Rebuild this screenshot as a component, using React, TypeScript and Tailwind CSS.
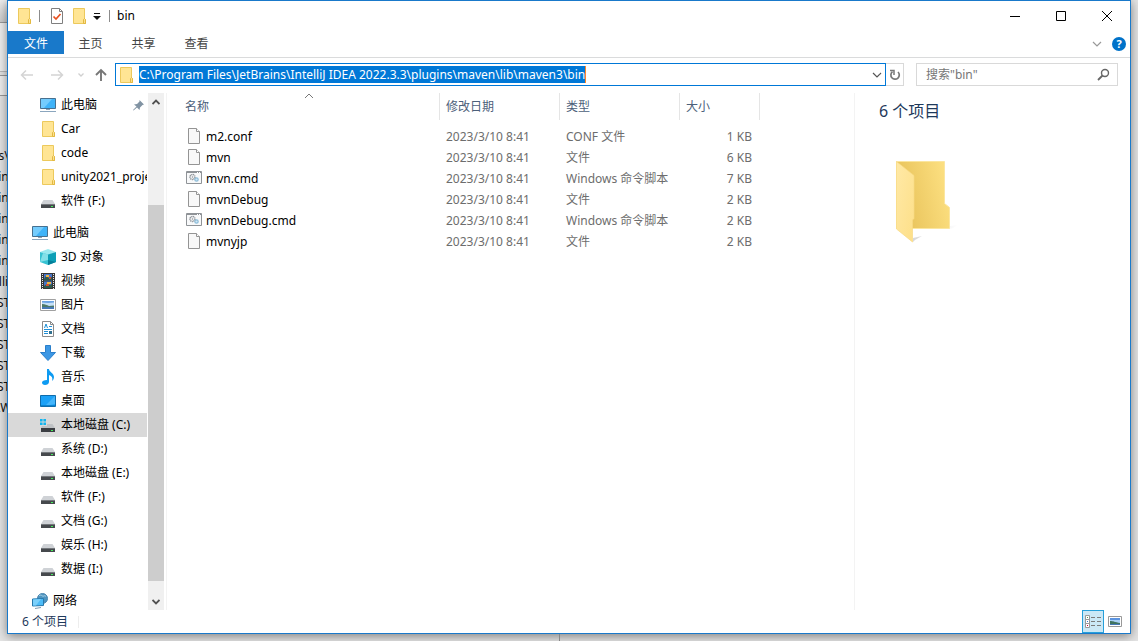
import * as React from 'react';

type IconName =
  | 'pc' | 'folder' | 'drive' | 'system' | 'cube' | 'video' | 'picture' | 'doc'
  | 'download' | 'music' | 'desktop' | 'network';

interface NavEntry { label: string; icon: IconName; root?: boolean; pinned?: boolean; selected?: boolean }

const quickAccess: NavEntry[] = [
  { label: '此电脑', icon: 'pc', pinned: true },
  { label: 'Car', icon: 'folder' },
  { label: 'code', icon: 'folder' },
  { label: 'unity2021_project', icon: 'folder' },
  { label: '软件 (F:)', icon: 'drive' },
];

const thisPc: NavEntry[] = [
  { label: '此电脑', icon: 'pc', root: true },
  { label: '3D 对象', icon: 'cube' },
  { label: '视频', icon: 'video' },
  { label: '图片', icon: 'picture' },
  { label: '文档', icon: 'doc' },
  { label: '下载', icon: 'download' },
  { label: '音乐', icon: 'music' },
  { label: '桌面', icon: 'desktop' },
  { label: '本地磁盘 (C:)', icon: 'system', selected: true },
  { label: '系统 (D:)', icon: 'drive' },
  { label: '本地磁盘 (E:)', icon: 'drive' },
  { label: '软件 (F:)', icon: 'drive' },
  { label: '文档 (G:)', icon: 'drive' },
  { label: '娱乐 (H:)', icon: 'drive' },
  { label: '数据 (I:)', icon: 'drive' },
];

const network: NavEntry[] = [{ label: '网络', icon: 'network', root: true }];

const files = [
  { name: 'm2.conf', type: 'CONF 文件', size: '1 KB' },
  { name: 'mvn', type: '文件', size: '6 KB' },
  { name: 'mvn.cmd', type: 'Windows 命令脚本', size: '7 KB' },
  { name: 'mvnDebug', type: '文件', size: '2 KB' },
  { name: 'mvnDebug.cmd', type: 'Windows 命令脚本', size: '2 KB' },
  { name: 'mvnyjp', type: '文件', size: '2 KB' },
];

const behindLines = ['s\\', 'in', 'in', 'in', 'in', 'in', 'lli', 'ST', 'ST', 'ST', 'ST', 'ST', '\\W'];

function Svg({ size = 16, children }: { size?: number; children: React.ReactNode }) {
  return <svg width={size} height={size} viewBox={`0 0 ${size} ${size}`} fill="none" className="shrink-0" aria-hidden="true">{children}</svg>;
}

function FolderIcon() {
  return (
    <Svg>
      <path d="M2.500 .5h11v11h1v4h-12z" fill="#ffe594" stroke="#ecc95c" />
      <path d="M12.500 15.500v-4l1-1 1 1v4z" fill="#fbe090" stroke="#e3b941" />
    </Svg>
  );
}

function PictureIcon() {
  return (
    <Svg>
      <path d="M.5 2.500h15v11H.5z" fill="#fff" stroke="#a0a0a0" />
      <path d="M2 4h12v8H2z" fill="#c5e0f7" />
      <path d="M2 4h12v1.500L8 6 2 5.500z" fill="#6ba3e3" />
      <path d="M2 7c3 0 5 1 7 2l5-.5V10H2z" fill="#4d7968" />
      <path d="M2 10h12v2H2z" fill="#4779b5" />
    </Svg>
  );
}

function NavIcon({ name }: { name: IconName }) {
  switch (name) {
    case 'folder':
      return <FolderIcon />;
    case 'picture':
      return <PictureIcon />;
    case 'pc':
      return (
        <Svg>
          <path d="M.5 1.500h15v10H.5z" fill="#3fb3f8" stroke="#47708f" />
          <path d="M1 2h11L4 11H1z" fill="#74ccfd" />
          <path d="M6 12h4v1H6z" fill="#8ca2b5" />
          <path d="M0 14.500h16" stroke="#8ba6be" />
        </Svg>
      );
    case 'drive':
      return (
        <Svg>
          <path d="M3.500 7h9L15 11H1z" fill="#cfd2d6" />
          <path d="M1 11h14v4H1z" fill="#46494d" />
          <path d="M1 11.500h14" stroke="#74787c" />
          <path d="M11 13h2v1h-2z" fill="#45ee5c" />
        </Svg>
      );
    case 'system':
      return (
        <Svg>
          <path d="M0 2h2.600v2.600H0zM3.400 2H6v2.600H3.400zM0 5.400h2.600V8H0zM3.400 5.400H6V8H3.400z" fill="#12b5ef" />
          <path d="M7 7h5.500l2.500 4H1l1-2h5z" fill="#bfc2c5" />
          <path d="M1 11h14v4H1z" fill="#3b3e42" />
          <path d="M11 13h2v1h-2z" fill="#45ee5c" />
        </Svg>
      );
    case 'cube':
      return (
        <Svg>
          <path d="M0 3l8-3 8 3-8 3z" fill="#9ae9ef" />
          <path d="M0 3l8 2.500V16l-8-3z" fill="#37c2d2" />
          <path d="M16 3L8 5.500V16l8-3z" fill="#0b9fb6" />
          <path d="M3 4l5 1.500V11l-8 2z" fill="#82e0e8" />
          <path d="M8 11l8 2-8 3z" fill="#057f99" />
        </Svg>
      );
    case 'video':
      return (
        <Svg>
          <path d="M1 0h14v16H1z" fill="#373737" />
          <path d="M4 1h8v6.500H4zM4 8.500h8V15H4z" fill="#4775c8" />
          <path d="M4 6l2-3 3 2 3-1v3.500H4zM4 13l3-2 3 1 2-1v4H4z" fill="#2f5a4d" />
          <path d="M6 2h3v2H6zM7 9h4v2H7z" fill="#f0b63c" />
          <path d="M9 4h2v2H9zM6 11h3v2H6z" fill="#d0502c" />
          <path d="M2.500 1v15M13.500 1v15" stroke="#e8e8e8" strokeDasharray="1 1" />
        </Svg>
      );
    case 'doc':
      return (
        <Svg>
          <path d="M2.500 .5h8l3 3v12h-11z" fill="#fff" stroke="#8b8b8b" />
          <path d="M10.500 .5v3h3" stroke="#8b8b8b" />
          <path d="M4.500 7L6 3l1.500 4M9 5.500h3M4 8.500h8M4 10.500h4M4 12.500h4" stroke="#1f8fd6" />
          <path d="M9 10h3v3H9z" fill="#31708f" />
        </Svg>
      );
    case 'download':
      return <Svg><path d="M5.500 .5h5v7h5l-7.500 8-7.500-8h5z" fill="#3c97e4" stroke="#2a7fcb" /></Svg>;
    case 'music':
      return (
        <Svg>
          <path d="M7 0h2c0 3 5 4 5 8 0 2-1 3-2 4 1-3 0-5-3-6v7c0 2-2 3-4 3s-3-1-3-2.500S4 11 7 11z" fill="#0e9bf2" />
        </Svg>
      );
    case 'desktop':
      return (
        <Svg>
          <path d="M.5 2.500h15v11H.5z" fill="#1ba1f7" stroke="#0f6cab" />
          <path d="M15 3v8L5 13z" fill="#44b5fb" />
          <path d="M1 12.500h14" stroke="#0a82cf" />
        </Svg>
      );
    case 'network':
      return (
        <Svg>
          <circle cx="10.500" cy="5.500" r="5" fill="#4f94bf" stroke="#4884ad" />
          <path d="M7 2.500c2-1 3 0 4 1 1-1 2-1 3 0" stroke="#a9d3e8" />
          <path d="M.5 6l11-.5v7l-11 .5z" fill="#4dbcf8" stroke="#2678ac" />
          <path d="M1 6.500l8-.5-5 6.500H1z" fill="#7bd0fb" />
          <path d="M3 15.500l6-1" stroke="#7e9bb0" />
        </Svg>
      );
  }
}

function FileIcon({ name }: { name: string }) {
  if (name.endsWith('.cmd')) {
    return (
      <Svg>
        <path d="M.5 1.500h15v12H.5z" fill="#f8f9fa" stroke="#8f9397" />
        <path d="M1 2.500h14" stroke="#8f9397" />
        <path d="M11 2h1v1h-1zM13 2h1v1h-1z" fill="#fff" />
        <circle cx="6.500" cy="7" r="2.500" stroke="#8f9499" strokeWidth="1.500" strokeDasharray="1.200 .5" />
        <circle cx="6.500" cy="7" r=".8" fill="#8f9499" />
        <circle cx="10.500" cy="9.500" r="1.700" fill="#cfe6f5" stroke="#8dbcd8" strokeWidth="1.200" />
      </Svg>
    );
  }
  return (
    <Svg>
      <path d="M2.500 .5h8l3 3v12h-11z" fill="#f8f8f8" stroke="#949494" />
      <path d="M10.500 .5v3h3" fill="#fff" stroke="#949494" />
    </Svg>
  );
}

function Chevron({ up, color = '#555', width = 1.2 }: { up?: boolean; color?: string; width?: number }) {
  return <Svg size={10}><path d={up ? 'M1 7l4-4 4 4' : 'M1 3l4 4 4-4'} stroke={color} strokeWidth={width} /></Svg>;
}

function ScrollArrow({ up }: { up?: boolean }) {
  return <Svg size={8}><path d={up ? 'M.5 6L4 2.500 7.500 6' : 'M.5 2L4 5.500 7.500 2'} stroke="#505050" strokeWidth="1.800" /></Svg>;
}

function NavGroup({ items }: { items: NavEntry[] }) {
  return (
    <ul>
      {items.map((item) => (
        <li key={item.label}>
          <button
            type="button"
            className={`flex h-6 w-full items-center gap-[5px] overflow-hidden whitespace-nowrap text-left text-black ${item.root ? 'pl-6' : 'pl-8'} ${item.selected ? 'bg-[#d9d9d9]' : 'hover:bg-[#e5f3ff]'}`}
          >
            <NavIcon name={item.icon} />
            <span className={item.pinned ? 'flex-1' : ''}>{item.label}</span>
            {item.pinned && (
              <span className="pr-[3px]">
                <Svg size={11}><path d="M6.500 0L11 4.500l-1.500.5L7 7.500 6.500 10 4 7.500.5 10.500 0 10l3.500-3.500L1 4.500 4 4l2.500-2.500z" fill="#8193a3" /></Svg>
              </span>
            )}
          </button>
        </li>
      ))}
    </ul>
  );
}

function TitleBar() {
  return (
    <header className="flex h-[30px] shrink-0 items-center">
      <div className="flex flex-1 items-center pl-2">
        <FolderIcon />
        <span className="ml-[7px] h-3 w-px bg-[#8c8c8c]" />
        <button type="button" aria-label="属性" className="ml-[9px]">
          <Svg>
            <path d="M2.500 .5h8l3 3v12h-11z" fill="#fff" stroke="#7f7f7f" />
            <path d="M10.500 .5v3h3" stroke="#7f7f7f" />
            <path d="M4.500 8.500L7 11l4.500-5" stroke="#e8501f" strokeWidth="1.700" />
          </Svg>
        </button>
        <button type="button" aria-label="新建文件夹" className="ml-[6px]"><FolderIcon /></button>
        <button type="button" aria-label="自定义快速访问工具栏" className="ml-[6px]">
          <Svg size={8}><path d="M1 1.500h6" stroke="#111" /><path d="M0 4h8L4 8z" fill="#111" /></Svg>
        </button>
        <span className="ml-2 h-3 w-px bg-[#8c8c8c]" />
        <h1 className="ml-[7px] text-black">bin</h1>
      </div>
      <button type="button" aria-label="最小化" className="flex h-full w-[46px] items-center justify-center"><Svg size={10}><path d="M0 5.500h10" stroke="#000" /></Svg></button>
      <button type="button" aria-label="最大化" className="flex h-full w-[46px] items-center justify-center"><Svg size={10}><path d="M.5 .5h9v9h-9z" stroke="#000" /></Svg></button>
      <button type="button" aria-label="关闭" className="flex h-full w-[46px] items-center justify-center"><Svg size={10}><path d="M0 0l10 10M10 0L0 10" stroke="#000" /></Svg></button>
    </header>
  );
}

function Ribbon() {
  return (
    <nav className="flex h-[27px] shrink-0 items-start border-b border-[#dadbdc] text-[#444]">
      <button type="button" className="h-[23px] w-14 bg-[#1979ca] pt-[2px] text-white">文件</button>
      {['主页', '共享', '查看'].map((tab) => <button key={tab} type="button" className="h-[25px] w-[53px]">{tab}</button>)}
      <div className="flex h-[26px] flex-1 items-center justify-end gap-[10px] pr-1">
        <button type="button" aria-label="展开功能区"><Chevron color="#999" /></button>
        <button type="button" aria-label="帮助" className="flex size-[14px] items-center justify-center rounded-full bg-[#0072c9] text-[11px] leading-[14px] font-bold text-white">?</button>
      </div>
    </nav>
  );
}

function AddressRow() {
  return (
    <div className="flex h-[35px] shrink-0 items-start pt-[5px] pr-3 pl-1">
      <button type="button" aria-label="后退" className="flex h-[23px] w-[30px] items-center justify-center"><Svg size={14}><path d="M13 7H1.500M6 2.500L1.500 7 6 11.500" stroke="#d4d4d4" strokeWidth="1.500" /></Svg></button>
      <button type="button" aria-label="前进" className="flex h-[23px] w-[30px] items-center justify-center"><Svg size={14}><path d="M1 7h11.500M8 2.500L12.500 7 8 11.500" stroke="#d4d4d4" strokeWidth="1.500" /></Svg></button>
      <button type="button" aria-label="最近浏览的位置" className="flex h-[23px] w-[18px] items-center justify-center"><Svg size={8}><path d="M1.500 2.500L4 5l2.500-2.500" stroke="#d0d0d0" strokeWidth="1.300" /></Svg></button>
      <button type="button" aria-label="上移" className="mr-[3px] flex h-[23px] w-[22px] items-center justify-center"><Svg size={14}><path d="M7 13V2M2 7l5-5 5 5" stroke="#777" strokeWidth="1.900" /></Svg></button>
      <div className="flex h-[23px] min-w-0 flex-1 items-center border border-[#0078d7] pr-[3px] pl-[2px]">
        <FolderIcon />
        <div className="ml-[5px] flex min-w-0 flex-1">
          <input
            aria-label="地址"
            defaultValue="C:\Program Files\JetBrains\IntelliJ IDEA 2022.3.3\plugins\maven\lib\maven3\bin"
            className="h-[17px] max-w-full min-w-0 border-r border-[#ff8728] bg-[#0078d7] p-0 text-white outline-none field-sizing-content"
          />
        </div>
        <button type="button" aria-label="以前的位置"><Chevron /></button>
      </div>
      <button type="button" aria-label="刷新" className="mr-3 flex h-[23px] w-[18px] items-center justify-center border border-l-0 border-[#d9d9d9]">
        <Svg size={12}><path d="M3.500 2.700A4.200 4.200 0 1 0 9 3" stroke="#777" strokeWidth="1.700" /><path d="M1 1.500h4V6" stroke="#777" strokeWidth="1.500" /></Svg>
      </button>
      <div className="flex h-[23px] w-[202px] shrink-0 items-center border border-[#d9d9d9] pr-[7px] pl-[9px]">
        <input aria-label="搜索" placeholder={'搜索"bin"'} className="h-[17px] min-w-0 flex-1 bg-transparent p-0 outline-none placeholder:text-[#767676]" />
        <Svg size={13}><circle cx="8" cy="5" r="3.500" stroke="#666" strokeWidth="1.400" /><path d="M5.500 7.500L1 12" stroke="#666" strokeWidth="1.800" /></Svg>
      </div>
    </div>
  );
}

function NavPane() {
  return (
    <aside className="flex w-[159px] shrink-0 border-r border-[#f3f3f3]">
      <div className="flex w-[139px] flex-col gap-2 overflow-hidden">
        <NavGroup items={quickAccess} />
        <NavGroup items={thisPc} />
        <NavGroup items={network} />
      </div>
      <div className="ml-px flex w-4 flex-col bg-[#f0f0f0]">
        <button type="button" aria-label="向上滚动" className="flex h-[17px] items-center justify-center"><ScrollArrow up /></button>
        <div className="flex-[95]" />
        <div className="flex-[376] bg-[#cdcdcd]" />
        <div className="flex-[12]" />
        <button type="button" aria-label="向下滚动" className="flex h-[17px] items-center justify-center"><ScrollArrow /></button>
      </div>
    </aside>
  );
}

function FileTable() {
  return (
    <div className="min-w-0 flex-1 overflow-hidden">
      <table className="w-[593px] table-fixed border-collapse text-left text-[#6d6d6d]">
        <colgroup>
          <col className="w-[273px]" />
          <col className="w-[120px]" />
          <col className="w-[120px]" />
          <col className="w-[80px]" />
        </colgroup>
        <thead>
          <tr className="h-[33px] align-top text-[#4c607a]">
            <th className="p-0 pl-3 font-normal" aria-sort="ascending">
              <button type="button" className="relative h-[27px] w-full border-r border-[#e5e5e5] pl-[6px] text-left">
                名称
                <span className="absolute inset-x-0 top-[-2px] flex justify-center"><Chevron up color="#777" width={1} /></span>
              </button>
            </th>
            {['修改日期', '类型', '大小'].map((label) => (
              <th key={label} className="p-0 font-normal">
                <button type="button" className="h-[27px] w-full border-r border-[#e5e5e5] pl-[6px] text-left">{label}</button>
              </th>
            ))}
          </tr>
        </thead>
        <tbody>
          {files.map((file) => (
            <tr key={file.name} className="h-[21px] hover:bg-[#e5f3ff]">
              <td className="p-0 pl-[19px] text-black">
                <span className="flex h-[17px] items-start gap-1">
                  <FileIcon name={file.name} />
                  <span className="self-end">{file.name}</span>
                </span>
              </td>
              <td className="p-0 pl-[6px]">2023/3/10 8:41</td>
              <td className="p-0 pl-[6px]">{file.type}</td>
              <td className="p-0 pr-2 text-right">{file.size}</td>
            </tr>
          ))}
        </tbody>
      </table>
    </div>
  );
}

function PreviewPane() {
  return (
    <section className="w-[276px] shrink-0 border-l border-[#f3f3f3] pt-2 pl-6">
      <h2 className="text-[16px] leading-5 text-[#1e395b]">6 个项目</h2>
      <svg width="64" height="84" viewBox="0 0 64 84" className="mt-[39px] ml-4" aria-hidden="true">
        <defs>
          <linearGradient id="back" gradientUnits="userSpaceOnUse" x1="10" x2="56" y1="50" y2="40"><stop stopColor="#e9c45c" /><stop offset="1" stopColor="#fcdf80" /></linearGradient>
          <linearGradient id="flap" x1="0" x2="1" y1="0" y2="1"><stop stopColor="#ffe9a6" /><stop offset="1" stopColor="#fddf88" /></linearGradient>
          <linearGradient id="shade" x1="0" x2="1" y1="0" y2="0"><stop stopColor="#d8d8d8" /><stop offset="1" stopColor="#fff" /></linearGradient>
        </defs>
        <path d="M55 66l8-1-6 3.500h-2zM18 78l9-2-7 4-2 2z" fill="url(#shade)" />
        <path d="M1.500 1.500h48v42l5 4v21h-53z" fill="url(#back)" stroke="#fbe6a0" />
        <path d="M1.500 1.500l17.500 14v43L17.500 60v22L1.500 69z" fill="url(#flap)" stroke="#f8da84" strokeWidth=".7" />
      </svg>
    </section>
  );
}

function StatusBar() {
  return (
    <footer className="flex h-[23px] shrink-0 items-center pr-1 pl-[14px] text-[#1e395b]">
      <span>6 个项目</span>
      <span className="ml-[10px] h-3 w-px bg-[#ededed]" />
      <div className="flex-1" />
      <button type="button" aria-label="详细信息" className="flex h-[23px] w-[22px] items-center justify-center border border-[#26a0da] bg-[#cbe8f6]">
        <Svg>
          <path d="M.5 1.500h4v4h-4zM.5 5.500h4v4h-4zM.5 9.500h4v4h-4z" fill="#fff" stroke="#999" />
          <path d="M2 3h1v1H2z" fill="#4d9a54" /><path d="M2 7h1v1H2z" fill="#3c78c8" /><path d="M2 11h1v1H2z" fill="#c03" />
          <path d="M6 3.500h4M12 3.500h4M6 7.500h4M12 7.500h4M6 11.500h4M12 11.500h4" stroke="#7b7b7b" />
        </Svg>
      </button>
      <button type="button" aria-label="大图标" className="flex h-[23px] w-[22px] items-center justify-center">
        <Svg size={14}>
          <path d="M.5 1.500h13v10H.5z" fill="#fff" stroke="#999" />
          <path d="M2 3h10v7H2z" fill="#a9d0f5" />
          <path d="M2 3h10v2H2z" fill="#5c94e0" />
          <path d="M2 6c3 0 5 1 10 2v1H2z" fill="#3f7460" />
          <path d="M2 9h10v1H2z" fill="#4779b5" />
        </Svg>
      </button>
    </footer>
  );
}

export default function App() {
  return (
    <div className="flex h-screen flex-col overflow-hidden bg-[#e4e4e4] font-['Noto_Sans','Noto_Sans_CJK_SC',sans-serif] text-[12px] leading-4">
      <div className="flex min-h-0 flex-1">
        <div className="w-[7px] shrink-0 overflow-hidden text-[#111]" aria-hidden="true">
          <div className="h-[23px] border-b border-[#999] bg-linear-to-b from-[#eee] to-[#ccc]" />
          <div className="h-[49px] border-b border-[#bbb] bg-white/40" />
          <div className="h-1 border-b border-[#999]" />
          <div className="h-5 border-b border-[#999] bg-white/40" />
          <div className="h-[52px]" />
          {behindLines.map((line, i) => <div key={i} className="flex h-[21px] justify-center whitespace-nowrap">{line}</div>)}
        </div>
        <main className="flex min-w-0 flex-1 flex-col border border-[#1979ca] bg-white shadow-[0_2px_10px_rgba(0,0,0,0.45)]">
          <TitleBar />
          <Ribbon />
          <AddressRow />
          <div className="flex min-h-0 flex-1">
            <NavPane />
            <FileTable />
            <PreviewPane />
          </div>
          <StatusBar />
        </main>
        <div className="w-[7px] shrink-0" />
      </div>
      <div className="flex h-[7px] shrink-0">
        <div className="w-1/2 max-w-[560px] border-r border-[#888]" />
      </div>
    </div>
  );
}
